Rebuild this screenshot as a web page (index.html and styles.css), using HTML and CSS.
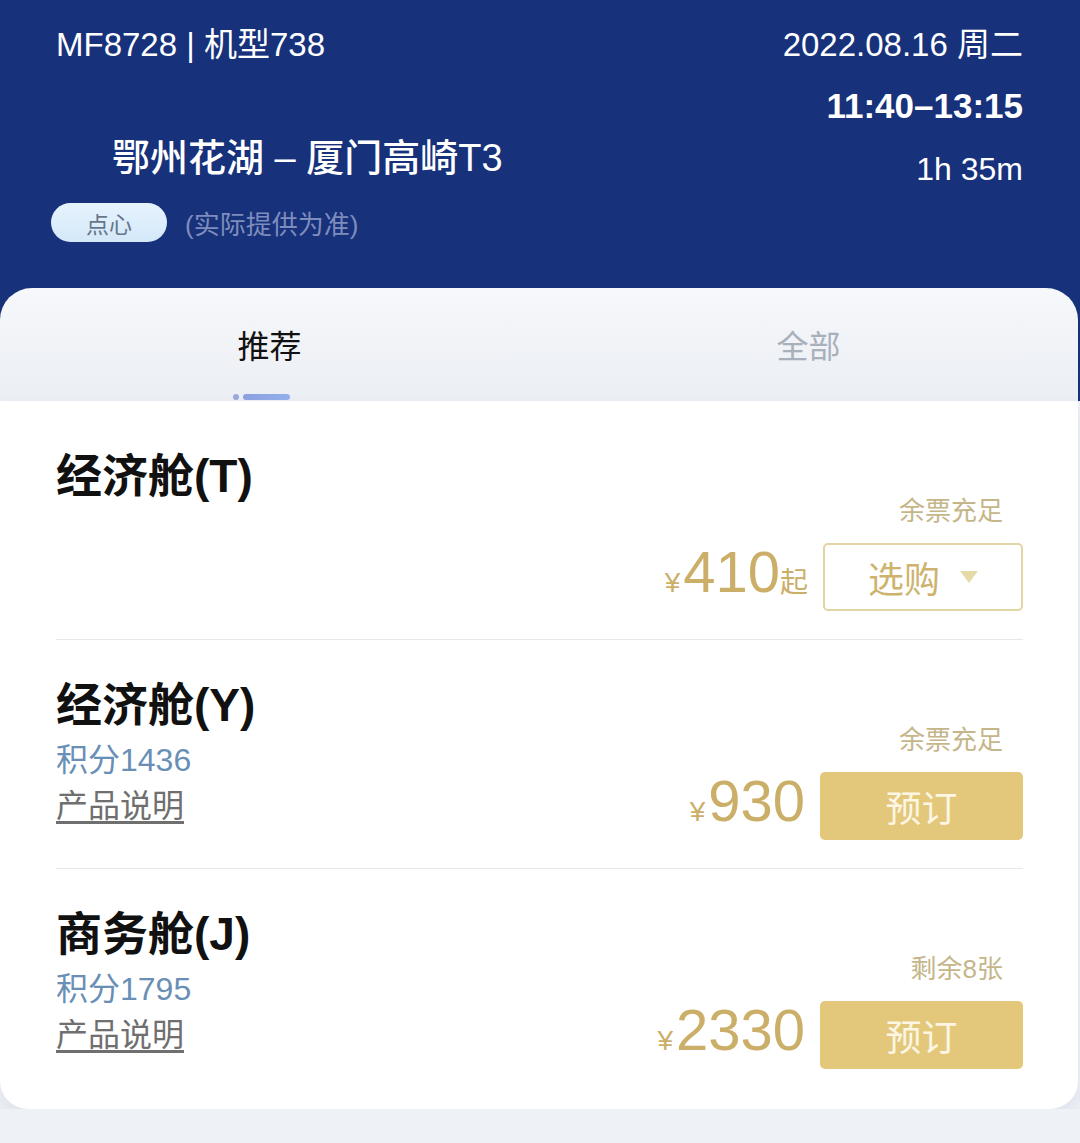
FILE: index.html
```html
<!DOCTYPE html>
<html>
<head>
  <meta charset="UTF-8">
  <title>航班舱位</title>
  <link rel="stylesheet" href="styles.css">
</head>
<body>
  <div class="header">
    <div class="flight">
      <div class="info">
        <div class="flight-no">MF8728 | 机型738</div>
        <div class="route">鄂州花湖 – 厦门高崎T3</div>
        <div class="meal">
          <span class="meal-tag">点心</span>
          <span class="meal-note">(实际提供为准)</span>
        </div>
      </div>
      <div class="times">
        <div class="date">2022.08.16 周二</div>
        <div class="time">11:40–13:15</div>
        <div class="duration">1h 35m</div>
      </div>
    </div>

    <div class="tabs">
      <div class="tab active">
        <span>推荐</span>
        <div class="tab-line"><span class="tab-dot"></span><span class="tab-bar"></span></div>
      </div>
      <div class="tab">
        <span>全部</span>
      </div>
    </div>
  </div>

  <div class="cabins">
    <div class="cabin">
      <div class="cabin-info">
        <div class="cabin-name">经济舱(T)</div>
      </div>
      <div class="buy">
        <div class="stock">余票充足</div>
        <div class="order">
          <div class="price"><span class="yen">¥</span><span class="amount">410</span><span class="from">起</span></div>
          <div class="btn btn-outline">选购 <span class="caret"></span></div>
        </div>
      </div>
    </div>

    <div class="cabin">
      <div class="cabin-info">
        <div class="cabin-name">经济舱(Y)</div>
        <div class="points">积分1436</div>
        <div class="desc">产品说明</div>
      </div>
      <div class="buy">
        <div class="stock">余票充足</div>
        <div class="order">
          <div class="price"><span class="yen">¥</span><span class="amount">930</span></div>
          <div class="btn">预订</div>
        </div>
      </div>
    </div>

    <div class="cabin">
      <div class="cabin-info">
        <div class="cabin-name">商务舱(J)</div>
        <div class="points">积分1795</div>
        <div class="desc">产品说明</div>
      </div>
      <div class="buy">
        <div class="stock">剩余8张</div>
        <div class="order">
          <div class="price"><span class="yen">¥</span><span class="amount">2330</span></div>
          <div class="btn">预订</div>
        </div>
      </div>
    </div>
  </div>
</body>
</html>
```

FILE: styles.css
```css
body {
  margin: 0;
  background-color: #eef1f6;
  font-family: "Liberation Sans", "Noto Sans CJK SC", sans-serif;
}

.header {
  background-color: #17317b;
  color: #fff;
}

.flight {
  display: flex;
  justify-content: space-between;
  padding: 25px 57px 46px 56px;
}

.flight-no {
  font-size: 33px;
  line-height: 40px;
}

.route {
  font-size: 38px;
  line-height: 48px;
  font-weight: 500;
  margin: 69px 0 0 56px;
}

.meal {
  display: flex;
  align-items: center;
  gap: 18px;
  margin: 21px 0 0 -5px;
}

.meal-tag {
  display: flex;
  align-items: center;
  justify-content: center;
  width: 116px;
  height: 39px;
  border-radius: 20px;
  background: linear-gradient(#e6f3fd, #d4e8f9);
  color: #66768a;
  font-size: 23px;
}

.meal-note {
  font-size: 26px;
  color: #7e8dbb;
}

.times {
  text-align: right;
}

.date {
  font-size: 33px;
  line-height: 40px;
}

.time {
  font-size: 35px;
  line-height: 44px;
  font-weight: bold;
  margin-top: 19px;
}

.duration {
  font-size: 32px;
  line-height: 40px;
  margin-top: 21px;
}

.tabs {
  display: grid;
  grid-template-columns: 1fr 1fr;
  height: 113px;
  margin-right: 2px;
  border-radius: 32px 32px 0 0;
  background: linear-gradient(#f6f8fb, #ebeef3);
}

.tab {
  display: flex;
  flex-direction: column;
  align-items: center;
  padding-top: 39px;
  font-size: 32px;
  line-height: 40px;
  color: #a8b0bc;
}

.tab.active {
  color: #111;
}

.tab-line {
  display: flex;
  gap: 4px;
  margin-top: 27px;
  margin-left: -16px;
}

.tab-dot {
  width: 6px;
  height: 6px;
  border-radius: 50%;
  background-color: #9aa6dc;
}

.tab-bar {
  width: 47px;
  height: 6px;
  border-radius: 3px;
  background: linear-gradient(90deg, #8c9fe2, #93b0ea);
}

.cabins {
  margin-right: 2px;
  padding: 0 55px 12px 56px;
  background-color: #fff;
  border-radius: 0 0 28px 28px;
  box-shadow: 0 8px 18px rgba(30, 50, 90, 0.08);
}

.cabin {
  display: flex;
  justify-content: space-between;
  padding: 38px 0 28px;
  border-bottom: 1px solid #e8e8e8;
}

.cabin:first-child {
  padding-top: 48px;
}

.cabin:last-child {
  border-bottom: none;
}

.cabin-name {
  font-size: 46px;
  line-height: 54px;
  font-weight: bold;
  color: #111;
}

.points {
  margin-top: 8px;
  font-size: 32px;
  line-height: 40px;
  color: #6a8fb6;
}

.desc {
  margin-top: 6px;
  font-size: 32px;
  line-height: 40px;
  color: #6f6f6f;
  text-decoration: underline;
  text-underline-offset: 4px;
}

.buy {
  display: flex;
  flex-direction: column;
  align-items: flex-end;
  margin-top: 46px;
}

.stock {
  margin-right: 20px;
  font-size: 26px;
  line-height: 32px;
  color: #c5b68a;
}

.order {
  display: flex;
  align-items: flex-end;
  gap: 15px;
  margin-top: 16px;
}

.price {
  margin-bottom: 10px;
  line-height: 1;
  color: #cbaf68;
  white-space: nowrap;
}

.price .yen {
  font-size: 28px;
  margin-right: 3px;
}

.price .amount {
  font-size: 58px;
}

.price .from {
  font-size: 28px;
}

.btn {
  display: flex;
  align-items: center;
  justify-content: center;
  box-sizing: border-box;
  width: 203px;
  height: 68px;
  border-radius: 5px;
  background-color: #e3c87c;
  color: #fdf6e4;
  font-size: 36px;
}

.btn-outline {
  width: 200px;
  gap: 20px;
  background-color: #fff;
  border: 2px solid #e2d5a2;
  color: #cdb36e;
}

.caret {
  width: 0;
  height: 0;
  border-left: 9px solid transparent;
  border-right: 9px solid transparent;
  border-top: 12px solid #e4dba8;
}
```
